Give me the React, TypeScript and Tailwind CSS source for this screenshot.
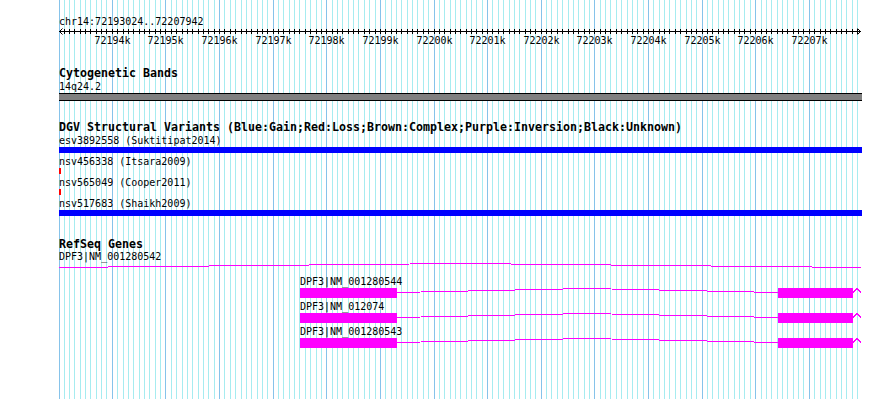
import React from 'react';

const START = 72193024;
const px = (bp: number) => Math.floor(60 + (bp - START) * 0.053615);

const gridLines: { x: number; major: boolean }[] = [{ x: 59, major: true }];
for (let k = 1; k <= 149; k++) {
  const bp = 72193000 + k * 100;
  gridLines.push({ x: px(bp), major: k % 10 === 0 });
}

const majors: { x: number; label: string }[] = [];
for (let k = 1; k <= 14; k++) {
  majors.push({ x: px(72193000 + k * 1000), label: `${72193 + k}k` });
}

const Grid = () => (
  <svg className="absolute left-0 top-0" width={890} height={399} shapeRendering="crispEdges">
    {gridLines.map((l) => (
      <line
        key={l.x}
        x1={l.x + 0.5}
        x2={l.x + 0.5}
        y1={0}
        y2={399}
        stroke={l.major ? '#86c3ea' : '#a6ecf0'}
        strokeWidth={1}
      />
    ))}
  </svg>
);

const Ruler = () => (
  <svg width={803} height={18} className="block">
    <g shapeRendering="crispEdges" stroke="#000" strokeWidth={1}>
      <line x1={0} x2={802} y1={4.5} y2={4.5} />
      {gridLines.slice(1).map((l) => (
        <line key={l.x} x1={l.x - 58.5} x2={l.x - 58.5} y1={2} y2={7} />
      ))}
    </g>
    <polyline points="3.5,1.5 0.5,4.5 3.5,7.5" fill="none" stroke="#000" strokeWidth={1} />
    <polyline points="798.5,1.5 801.5,4.5 798.5,7.5" fill="none" stroke="#000" strokeWidth={1} />
    {majors.map((m) => (
      <text key={m.label} x={m.x - 58.5} y={17} textAnchor="middle" fontSize={10} fill="#000">
        {m.label}
      </text>
    ))}
  </svg>
);

const Title = ({ children, className = '' }: { children: React.ReactNode; className?: string }) => (
  <div className={`h-[13px] whitespace-nowrap text-[11.63px] font-bold leading-[13px] ${className}`}>{children}</div>
);

const Label = ({ children, className = '' }: { children: React.ReactNode; className?: string }) => (
  <div className={`relative z-10 h-[11px] whitespace-nowrap leading-[11px] ${className}`}>{children}</div>
);

const variants = [
  { name: 'esv3892558 (Suktitipat2014)', color: 'blue' },
  { name: 'nsv456338 (Itsara2009)', color: 'red' },
  { name: 'nsv565049 (Cooper2011)', color: 'red' },
  { name: 'nsv517683 (Shaikh2009)', color: 'blue' },
];

const transcripts = ['DPF3|NM_001280544', 'DPF3|NM_012074', 'DPF3|NM_001280543'];

const Transcript = () => (
  <svg width={803} height={10} className="block">
    <g shapeRendering="crispEdges" fill="#ff00ff">
      <rect x={241} y={0} width={97} height={10} />
      <rect x={719} y={0} width={75} height={10} />
    </g>
    <g shapeRendering="crispEdges" fill="none" stroke="#ff00ff" strokeWidth={1}>
      <polyline points="338,4.5 528.5,0.5 719,4.5" />
      <polyline points="794,4.5 798,0.5 802,4.5" />
    </g>
  </svg>
);

export default function App() {
  return (
    <div className="relative h-[399px] w-[890px] overflow-hidden bg-white font-['DejaVu_Sans_Mono',monospace] text-[10px] text-black">
      <Grid />
      <div className="relative ml-[59px] flex w-[803px] flex-col pt-[16px]">
        {/* ruler */}
        <Label>chr14:72193024..72207942</Label>
        <Ruler />

        {/* cytogenetic bands */}
        <Title className="mt-[22px]">Cytogenetic Bands</Title>
        <Label className="mt-px">14q24.2</Label>
        <div className="mt-px h-[8px] border-y border-black bg-[#808080]" />

        {/* DGV */}
        <Title className="mt-[20px]">
          DGV Structural Variants (Blue:Gain;Red:Loss;Brown:Complex;Purple:Inversion;Black:Unknown)
        </Title>
        <div className="mt-px flex flex-col gap-[3px]">
          {variants.map((v) => (
            <div key={v.name} className="flex flex-col">
              <Label>{v.name}</Label>
              <div
                className={`mt-px h-[6px] ${v.color === 'blue' ? 'w-full bg-[#0000ff]' : 'w-[2px] bg-[#ff0000]'}`}
              />
            </div>
          ))}
        </div>

        {/* RefSeq */}
        <Title className="mt-[22px]">RefSeq Genes</Title>
        <Label>DPF3|NM_001280542</Label>
        <svg width={803} height={10} className="mt-px block">
          <polyline
            points="0,4.5 401,0.5 802,4.5"
            fill="none"
            stroke="#ff00ff"
            strokeWidth={1}
            shapeRendering="crispEdges"
          />
        </svg>
        <div className="mt-[3px] flex flex-col gap-[3px]">
          {transcripts.map((t) => (
            <div key={t} className="flex flex-col">
              <Label className="ml-[241px]">{t}</Label>
              <div className="mt-px">
                <Transcript />
              </div>
            </div>
          ))}
        </div>
      </div>
    </div>
  );
}
